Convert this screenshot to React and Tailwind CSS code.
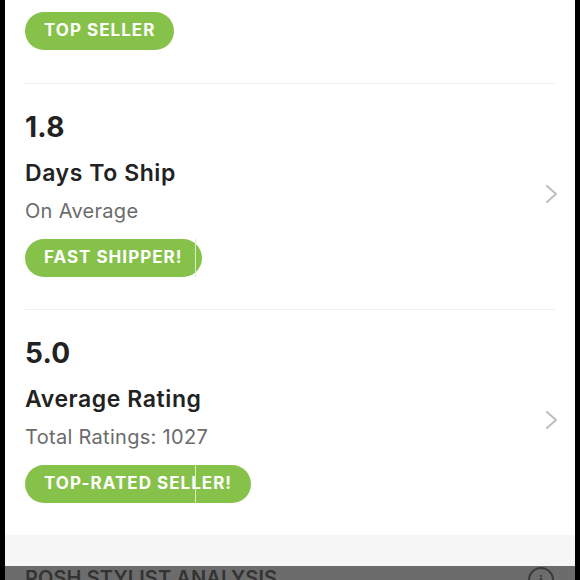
import React from "react";

function Chevron() {
  return (
    <svg width="14" height="20" viewBox="0 0 14 20" fill="none" className="shrink-0">
      <path d="M2 2 L11 10 L2 18" stroke="#bdbdbd" strokeWidth="2" strokeLinecap="round" strokeLinejoin="round" />
    </svg>
  );
}

function Pill({ children, lineAt }) {
  return (
    <div className="relative inline-flex h-[38px] items-center rounded-full bg-[#86c24a] px-[19px] text-[17px] font-bold tracking-[0.06em] text-white">
      {children}
      {lineAt ? (
        <span className="absolute top-0 bottom-0 w-px bg-[#dbeec6]" style={{ left: lineAt }} />
      ) : null}
    </div>
  );
}

function Stat({ value, title, sub, badge, lineAt }) {
  return (
    <div className="flex shrink-0 items-center border-t border-[#eeeeee] pt-[27px] pb-[32px]">
      <div className="flex flex-1 flex-col items-start">
        <div className="h-[32px] text-[28px] font-bold leading-[32px] tracking-[0.01em] text-[#222]">{value}</div>
        <div className="mt-[16px] h-[28px] text-[23px] font-semibold leading-[28px] tracking-[0.025em] text-[#222]">{title}</div>
        <div className="mt-[12px] h-[24px] text-[20px] leading-[24px] tracking-[0.015em] text-[#6b6b6b]">{sub}</div>
        <div className="mt-[16px]">
          <Pill lineAt={lineAt}>{badge}</Pill>
        </div>
      </div>
      <div className="-mr-[4px]">
        <Chevron />
      </div>
    </div>
  );
}

export default function App() {
  return (
    <div
      className="h-[580px] w-[580px] overflow-hidden bg-black"
      style={{ fontFamily: "Inter, 'Open Sans', sans-serif" }}
    >
      <div className="ml-[5px] flex h-[580px] w-[570px] flex-col bg-white">
        <div className="shrink-0 px-[20px]">
          <div className="pt-[12px] pb-[33px]">
            <Pill>TOP SELLER</Pill>
          </div>
          <Stat value="1.8" title="Days To Ship" sub="On Average" badge="FAST SHIPPER!" lineAt="170px" />
          <Stat value="5.0" title="Average Rating" sub="Total Ratings: 1027" badge="TOP-RATED SELLER!" lineAt="170px" />
        </div>
        <div className="h-[31px] shrink-0 bg-[#f6f6f6]" />
        <div className="flex flex-1 shrink-0 items-start justify-between bg-[#6c6c6c] pl-[20px] pr-[21px]">
          <div className="text-[20px] font-semibold leading-[24px] tracking-[0.005em] text-[#333]">
            POSH STYLIST ANALYSIS
          </div>
          <div className="mt-[1px] flex h-[26px] w-[26px] items-center justify-center rounded-full border-2 border-[#3a3a3a] text-[14px] font-bold text-[#3a3a3a]">
            i
          </div>
        </div>
      </div>
    </div>
  );
}
